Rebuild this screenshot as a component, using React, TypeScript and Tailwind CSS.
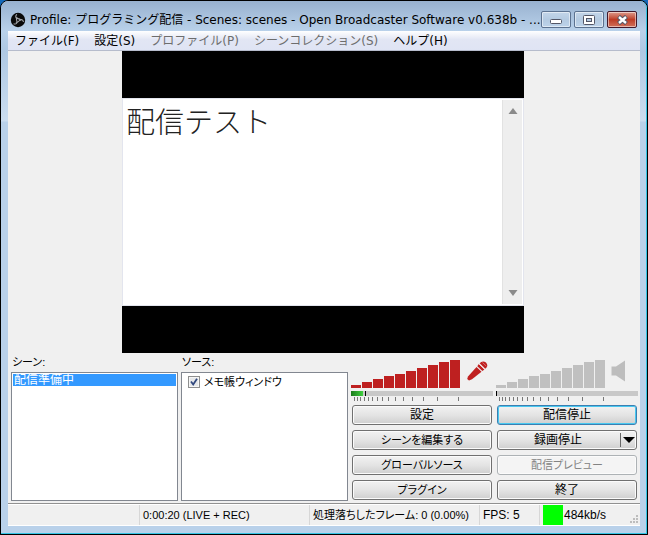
import React from 'react';

const uiFont = "font-['DejaVu_Sans','Noto_Sans_CJK_JP',sans-serif]";
const gothic = "font-['Liberation_Sans','Noto_Sans_CJK_JP',sans-serif] [font-feature-settings:'palt']";

const menus = [
  { label: 'ファイル(F)', enabled: true },
  { label: '設定(S)', enabled: true },
  { label: 'プロファイル(P)', enabled: false },
  { label: 'シーンコレクション(S)', enabled: false },
  { label: 'ヘルプ(H)', enabled: true },
];

const barHeights = [3, 6, 9, 12, 14, 17, 20, 23, 26, 28];
const tickOffsets = [3, 6, 9, 13, 17, 21, 26, 31, 37, 44, 52, 61, 72, 86, 107];

function AppIcon() {
  return (
    <svg width="16" height="16" viewBox="0 0 16 16" className="mr-1 shrink-0" aria-hidden="true">
      <circle cx="8" cy="8" r="7.2" fill="#0a0a0a" />
      {[0, 120, 240].map((angle) => (
        <path
          key={angle}
          transform={`rotate(${angle} 8 8)`}
          d="M6.6 2.6 C4.9 4.4 5.8 6.5 8 6.6 C9.4 6.7 10.4 7.4 10.8 8.4"
          fill="none"
          stroke="#a4a7ac"
          strokeWidth="1.1"
          strokeLinecap="round"
        />
      ))}
    </svg>
  );
}

function TitleBar() {
  const box = 'flex h-[17px] w-[30px] items-center justify-center rounded-[2px] border shadow-[inset_0_0_0_1px_rgba(255,255,255,0.5)]';
  const plain = 'border-[#5c7290] bg-linear-to-b from-[#c3d5e9] via-[#b4cae1] via-50% to-[#bdd3ea]';
  return (
    <header className={`flex h-[30px] items-center px-[9px] pt-[7px] ${uiFont}`}>
      <AppIcon />
      <h1 className="min-w-0 flex-1 truncate text-[12px] leading-4 text-black">
        Profile: プログラミング配信 - Scenes: scenes - Open Broadcaster Software v0.638b - ...
      </h1>
      <div className="flex shrink-0 gap-[3px]">
        <button type="button" aria-label="最小化" className={`${box} ${plain}`}>
          <svg width="12" height="5" viewBox="0 0 12 5" className="mt-1"><rect x="0.5" y="0.5" width="11" height="4" rx="1" fill="#fff" stroke="#535666" /></svg>
        </button>
        <button type="button" aria-label="最大化" className={`${box} ${plain}`}>
          <svg width="12" height="10" viewBox="0 0 12 10">
            <rect x="0.5" y="0.5" width="11" height="9" rx="1" fill="#fff" stroke="#535666" />
            <rect x="3.5" y="3.5" width="5" height="3" fill="#b4cae1" stroke="#535666" />
          </svg>
        </button>
        <button type="button" aria-label="閉じる" className={`${box} border-[#43182a] bg-linear-to-b from-[#dc9a8c] via-[#bd3b25] via-50% to-[#d0705a]`}>
          <svg width="13" height="10" viewBox="0 0 13 10">
            <path d="M2.5 1.5 L10.5 8.5 M10.5 1.5 L2.5 8.5" stroke="#535666" strokeWidth="4.4" />
            <path d="M3 2 L10 8 M10 2 L3 8" stroke="#fff" strokeWidth="2.4" />
          </svg>
        </button>
      </div>
    </header>
  );
}

function MenuBar() {
  return (
    <nav className={`flex h-5 items-center gap-[15px] border-b border-[#b6bccc] bg-linear-to-b from-white via-[#e2e6f4] via-45% to-[#dfe4f4] px-[7px] text-[12px] leading-4 ${uiFont}`}>
      {menus.map((m) => (
        <button key={m.label} type="button" disabled={!m.enabled} className="whitespace-nowrap text-black disabled:text-[#6d6d6d]">
          {m.label}
        </button>
      ))}
    </nav>
  );
}

function Preview() {
  return (
    <section aria-label="preview" className="flex justify-center pr-[2px]">
      <div className="w-[402px] max-w-full bg-black py-[47px]">
        <div className="flex h-[208px] justify-between border border-[#e3e5ee] bg-white p-px">
          <p className="pt-1 pl-[2px] font-['Noto_Sans_CJK_JP',sans-serif] text-[29px] leading-[32px] font-light text-[#222]">配信テスト</p>
          <div className="flex w-5 flex-col items-center justify-between border-l border-[#e2e2e2] bg-[#eeeeee] py-2">
            <svg width="10" height="6" viewBox="0 0 10 6"><path d="M5 0 L9.5 6 H0.5 Z" fill="#8a8a8a" /></svg>
            <svg width="10" height="6" viewBox="0 0 10 6"><path d="M5 6 L9.5 0 H0.5 Z" fill="#8a8a8a" /></svg>
          </div>
        </div>
      </div>
    </section>
  );
}

function Volume({ active, children }: { active: boolean; children: React.ReactNode }) {
  return (
    <div>
      <div className="flex h-[30px] items-start gap-[6px]">
        <svg width="109" height="30" viewBox="0 0 109 30" className="shrink-0">
          {barHeights.map((h, i) => (
            <rect key={i} x={i * 11} y={29 - h} width="10" height={h} fill={active ? '#be2020' : '#c0c0c0'} />
          ))}
        </svg>
        {children}
      </div>
      <div className="mt-[2px] flex h-[5px] bg-[#c8c8c8]">
        {active && <div className="mr-[2px] w-3 bg-linear-to-r from-[#1c7a1c] to-[#3fd03f]" />}
        <div className="w-px bg-black" />
      </div>
      <svg width="109" height="5" viewBox="0 0 109 5" className="mt-px block">
        {tickOffsets.map((x) => (
          <rect key={x} x={x} y="0" width="1" height="4" fill="#777" />
        ))}
      </svg>
    </div>
  );
}

function MicIcon() {
  return (
    <svg width="23" height="24" viewBox="0 0 23 24" aria-hidden="true">
      <path d="M3 21.5 L1.2 20 L2 17.5 L10.5 8 L15.5 12.8 L6 20.3 Z" fill="#c02020" />
      <path d="M11.3 7.2 L12.8 5 L18.4 10.5 L16.4 12.1 Z" fill="#c02020" />
      <path d="M13.6 4.2 Q16.5 1 20 3.5 Q23 7 19.3 9.8 Z" fill="#c02020" />
      <path d="M13 5 L18.6 10.4" stroke="#f0dada" strokeWidth="0.9" />
      <path d="M16.5 3.5 L20.2 7" stroke="#e09090" strokeWidth="0.7" />
    </svg>
  );
}

function SpeakerIcon() {
  return (
    <svg width="16" height="24" viewBox="0 0 16 24" aria-hidden="true">
      <path d="M0.5 7.5 H5 L14 1.5 V22.5 L5 16.5 H0.5 Z" fill="#bdbdbd" />
    </svg>
  );
}

const buttonBase =
  'h-5 w-full rounded-[3px] border bg-linear-to-b from-[#f2f2f2] via-[#e4e4e4] via-50% to-[#cfcfcf] text-center leading-[18px] text-black';
const pushButton = `${buttonBase} border-[#707070] shadow-[inset_0_0_0_1px_#fbfbfb] disabled:border-[#adb2b5] disabled:bg-none disabled:bg-[#f4f4f4] disabled:text-[#838383]`;

function Controls() {
  return (
    <div className="flex shrink-0 gap-[3px] pt-[6px] pb-px">
      <div className="w-[142px]">
        <Volume active><MicIcon /></Volume>
        <div className="mt-[3px] flex flex-col gap-[5px] px-px">
          <button type="button" className={`${pushButton} text-[12px]`}>設定</button>
          <button type="button" className={`${pushButton} text-[11px]`}>シーンを編集する</button>
          <button type="button" className={`${pushButton} text-[11px]`}>グローバルソース</button>
          <button type="button" className={`${pushButton} text-[11px]`}>プラグイン</button>
        </div>
      </div>
      <div className="w-[142px]">
        <Volume active={false}><SpeakerIcon /></Volume>
        <div className="mt-[3px] flex flex-col gap-[5px] px-px">
          <button type="button" className={`${buttonBase} border-[#3c7fb1] text-[12px] shadow-[inset_0_0_0_1px_#48c8f0]`}>配信停止</button>
          <button type="button" className={`${pushButton} flex items-center text-[12px]`}>
            <span className="flex-1 pr-[2px]">録画停止</span>
            <span className="flex h-[14px] w-4 items-center border-l border-[#666] pl-[2px]">
              <svg width="12" height="6" viewBox="0 0 12 6"><path d="M0 0 H12 L6 6 Z" fill="#000" /></svg>
            </span>
          </button>
          <button type="button" disabled className={`${pushButton} text-[11px]`}>配信プレビュー</button>
          <button type="button" className={`${pushButton} text-[12px]`}>終了</button>
        </div>
      </div>
    </div>
  );
}

function Panels() {
  return (
    <main className={`flex gap-[3px] pr-[2px] pb-[2px] pl-[3px] ${gothic}`}>
      <section className="flex min-w-0 flex-1 flex-col">
        <h2 id="scenes" className="h-[19px] pl-px text-[11px] leading-[18px]">シーン:</h2>
        <ul role="listbox" aria-labelledby="scenes" className="flex-1 border border-[#828790] bg-white p-px text-[12px]">
          <li role="option" aria-selected="true" className="h-3 bg-[#3399ff] pl-px leading-3 text-white">配信準備中</li>
        </ul>
      </section>
      <section className="flex min-w-0 flex-1 flex-col">
        <h2 className="h-[19px] pl-px text-[11px] leading-[18px]">ソース:</h2>
        <div className="flex-1 border border-[#828790] bg-white px-[6px] py-px">
          <label className="flex items-center gap-1 text-[11px] leading-4">
            <span className="grid size-3">
              <input type="checkbox" defaultChecked className="peer col-start-1 row-start-1 size-3 appearance-none border border-[#8e8f8f] bg-[#e6e8ea] shadow-[inset_0_0_0_1px_#f6f6f6]" />
              <svg viewBox="0 0 12 12" className="pointer-events-none invisible col-start-1 row-start-1 size-3 peer-checked:visible">
                <path d="M3 5.5 L5.2 8.5 L9 2.8" fill="none" stroke="#32497f" strokeWidth="1.8" />
              </svg>
            </span>
            メモ帳ウィンドウ
          </label>
        </div>
      </section>
      <Controls />
    </main>
  );
}

function StatusBar() {
  const pane = 'shrink-0 border-l border-[#d7d7d7] pl-[3px] whitespace-nowrap';
  return (
    <footer className={`flex h-[23px] border-t border-[#919191] ${gothic}`}>
      <div className="flex min-w-0 flex-1 border-y border-white text-[12px] leading-5">
        <span className="w-[131px] shrink-0" />
        <span className={`${pane} w-[170px] text-[11px] leading-5`}>0:00:20 (LIVE + REC)</span>
        <span className={`${pane} w-[170px] text-[11px] leading-5`}>処理落ちしたフレーム: 0 (0.00%)</span>
        <span className={`${pane} w-[60px]`}>FPS: 5</span>
        <span className="flex flex-1 gap-px border-l border-[#d7d7d7] pl-[3px]">
          <span className="h-5 w-5 bg-[#00ff00]" />484kb/s
        </span>
        <svg width="10" height="10" viewBox="0 0 10 10" className="self-end" aria-hidden="true">
          {[[6, 0], [3, 3], [6, 3], [0, 6], [3, 6], [6, 6]].map(([x, y]) => (
            <rect key={`${x}-${y}`} x={x} y={y} width="2" height="2" fill="#bdbdbd" />
          ))}
        </svg>
      </div>
    </footer>
  );
}

export default function App() {
  return (
    <div className="bg-linear-to-b from-[#1468b8] from-[10px] to-black to-[12px]">
      <div className="overflow-hidden rounded-t-[8px] border border-black bg-[#b9d1ea]">
        <div className="rounded-t-[7px] border-r border-b border-[#34c4e4] bg-[linear-gradient(#98b1cf,#b9d1ea_30px,#aec8e3_50px,#cbddf0_120px,#b9d1ea_121px)]">
          <TitleBar />
          <div className="mr-[6px] mb-[7px] ml-[7px] bg-[#f0f0f0]">
            <MenuBar />
            <Preview />
            <Panels />
            <StatusBar />
          </div>
        </div>
      </div>
    </div>
  );
}
